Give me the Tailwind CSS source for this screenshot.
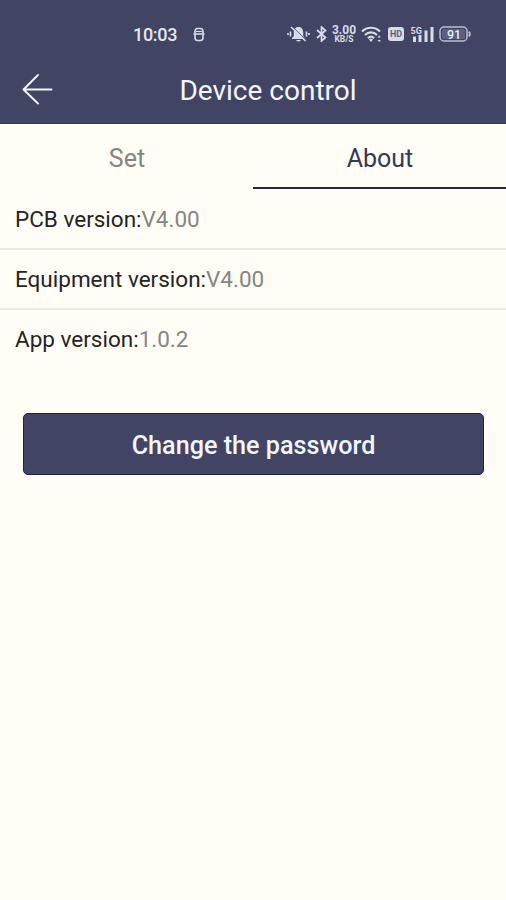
<!DOCTYPE html>
<html lang="en">
<head>
  <meta charset="UTF-8" />
  <meta name="viewport" content="width=device-width, initial-scale=1.0" />
  <title>Device control</title>
  <script src="https://cdn.jsdelivr.net/npm/@tailwindcss/browser@4"></script>
</head>
<body class="min-h-screen bg-[#fffdf6] font-[Roboto,sans-serif] whitespace-nowrap">

  <header class="h-[124px] bg-[#414563] text-[#f2f5ff] border-b border-[#343b5e]">
    <!-- Status bar -->
    <div class="flex items-center h-[68px] pl-[133px] pr-[35px]">
      <span class="text-[18px] leading-none font-medium w-[60px] pt-px tracking-[-0.3px] text-[#e4e8f5]">10:03</span>
      <svg class="w-3 h-[15px]" viewBox="0 0 12 15" fill="none" stroke="#d7dceb" stroke-width="1.6">
        <path d="M2 7V4.500q0-3 2.500-3h3q2.500 0 2.500 3V7M.5 7h11M2 7v3.500q0 3 2.500 3h3q2.500 0 2.500-3V7" />
        <path d="M3 4.500h6" stroke-width="1.200" />
      </svg>

      <div class="flex items-center ml-auto">
        <!-- Muted bell -->
        <svg class="w-[23px] h-[18px]" viewBox="0 0 23 18" fill="none" stroke="#d7dceb">
          <path d="M4.500 14l2.300-3V7.500C6.800 4 8.800 2 11.500 2s4.700 2 4.700 5.500V11l2.300 3zM9 15h5q-2.500 3-5 0z" fill="#d7dceb" stroke="none" />
          <path d="M5.500 2l13.500 13" stroke="#414563" stroke-width="1" />
          <path d="M4 2l14.500 14M3.500 6.500v5M1 8v2M19.500 6.500v5M22 8v2" stroke-width="1.600" />
        </svg>
        <svg class="w-[11px] h-4 ml-[6px]" viewBox="0 0 11 16" fill="none" stroke="#d7dceb" stroke-width="1.700">
          <path d="M1 4l8.500 7.500-4 3.500V1l4 3.500L1 12" />
        </svg>
        <div class="flex flex-col items-center w-[24px] ml-[5px] text-[#d7dceb] font-bold">
          <span class="text-[12px] leading-[10px]">3.00</span>
          <span class="text-[8.5px] leading-[8px]">KB/S</span>
        </div>
        <!-- Wifi -->
        <svg class="w-[21px] h-[17px] ml-[5px]" viewBox="0 0 21 17" fill="none" stroke="#d7dceb" stroke-width="2.200">
          <path d="M1 5.500c5-5 13-5 18 0M4 9c3.500-3.500 8.500-3.500 12 0M7 12.200c2-2 4-2 6 0" />
          <path d="M8 13.500l2 2.500 2-2.500-2-1z" fill="#d7dceb" stroke="none" />
          <path d="M16.500 11.500l1.700-2 1.700 2zM16.500 14l1.700 2 1.700-2z" fill="#d7dceb" stroke="none" />
        </svg>
        <span class="flex items-center justify-center w-4 h-[14px] ml-[6px] pt-px rounded-[3px] bg-[#d7dceb] text-[#5c6283] text-[9px] leading-none font-bold">HD</span>
        <!-- Mobile signal -->
        <svg class="w-[23px] h-[18px] ml-[7px]" viewBox="0 0 23 18" fill="#d7dceb">
          <text x="-.5" y="8.500" font-family="Roboto, sans-serif" font-size="9" font-weight="700">5G</text>
          <path d="M2 11.500h3V17H2zM7.500 10h3v7h-3zM13.500 5.500h3V17h-3zM19.500 2h3v15h-3z" />
        </svg>
        <svg class="w-[32px] h-[16px] ml-[5px]" viewBox="0 0 32 16" fill="none" stroke="#b9bfd3" stroke-width="1.500">
          <rect x="1" y="1" width="27" height="14" rx="4" />
          <path d="M30 5.500q1.500 2.500 0 5" stroke-width="2" />
          <rect x="3" y="3" width="23" height="10" rx="2" fill="#596080" stroke="none" />
          <text x="15" y="12.500" text-anchor="middle" fill="#e8ecf8" stroke="none" font-family="Roboto, sans-serif" font-size="12.500" font-weight="500">91</text>
        </svg>
      </div>
    </div>

    <!-- Title bar -->
    <div class="grid grid-cols-[68px_1fr_60px] items-center h-[46px] pl-[22px]">
      <svg class="w-8 h-8 mb-1" viewBox="0 0 32 32" fill="none" stroke="#f2f5ff" stroke-width="2" stroke-linecap="round" stroke-linejoin="round">
        <path d="M16 2L1.500 16.500l14.500 14M1.500 16.500H29.500" />
      </svg>
      <h1 class="text-center text-[28px] leading-none">Device control</h1>
    </div>
  </header>

  <!-- Tabs -->
  <nav class="grid grid-cols-2 h-[65px] text-center text-[25px]">
    <a class="flex items-center justify-center pt-[5px] pl-px text-[#858582]">Set</a>
    <a class="flex items-center justify-center pt-[6px] pl-px border-b-2 border-[#23294f] text-[#353955]">About</a>
  </nav>

  <main>
    <ul class="text-[22.5px] text-[#242424]">
      <li class="flex items-center h-[61px] pt-[2px] px-[15px] border-b-2 border-[#ebe9e3]">PCB version:<span class="text-[#868683]">V4.00</span></li>
      <li class="flex items-center h-[60px] pt-px px-[15px] border-b-2 border-[#ebe9e3]">Equipment version:<span class="text-[#868683]">V4.00</span></li>
      <li class="flex items-center h-[59px] px-[15px]">App version:<span class="text-[#868683]">1.0.2</span></li>
    </ul>
    <button class="block w-[461px] h-[62px] mt-[44px] ml-[23px] pt-[3px] rounded-[5px] bg-[#414563] border-[1.5px] border-[#1b2450] text-[#f2f5ff] text-[25.2px] font-medium">Change the password</button>
  </main>

</body>
</html>
